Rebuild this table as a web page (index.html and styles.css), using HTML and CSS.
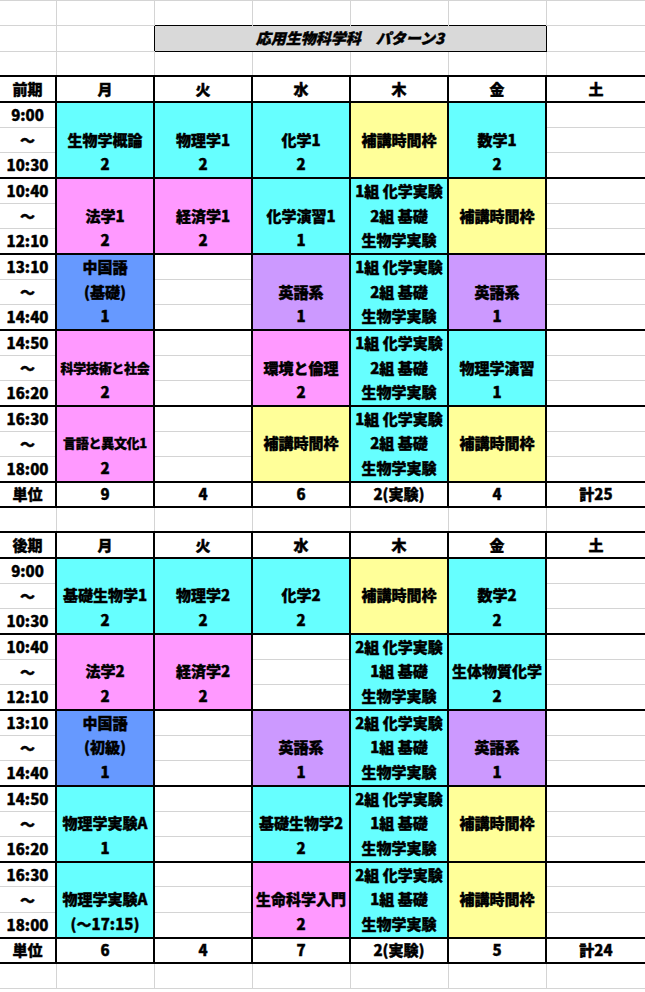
FILE: index.html
```html
<!DOCTYPE html>
<html lang="ja">
<head>
  <meta charset="UTF-8">
  <meta name="viewport" content="width=device-width, initial-scale=1">
  <title>応用生物科学科 パターン3</title>
  <link rel="stylesheet" href="styles.css">
</head>
<body>
  <table class="sheet">
    <colgroup>
      <col class="c-time">
      <col class="c-day"><col class="c-day"><col class="c-day"><col class="c-day"><col class="c-day">
      <col class="c-sat">
    </colgroup>

    <tr class="gl"><td></td><td></td><td class="nb"></td><td class="nb"></td><td class="nb"></td><td class="nb"></td><td></td></tr>
    <tr class="gl"><td></td><td class="nr"></td><td colspan="4" class="title">応用生物科学科　パターン3</td><td></td></tr>
    <tr class="gl"><td></td><td></td><td class="nt"></td><td class="nt"></td><td class="nt"></td><td class="nt"></td><td></td></tr>

    <!-- 前期 -->
    <tr class="hd"><td>前期</td><td>月</td><td>火</td><td>水</td><td>木</td><td>金</td><td>土</td></tr>

    <tr class="pa">
      <td>9:00</td>
      <td rowspan="3" class="blk cyan"><div class="ln"><span></span><span>生物学概論</span><span>2</span></div></td>
      <td rowspan="3" class="blk cyan"><div class="ln"><span></span><span>物理学1</span><span>2</span></div></td>
      <td rowspan="3" class="blk cyan"><div class="ln"><span></span><span>化学1</span><span>2</span></div></td>
      <td rowspan="3" class="blk yellow"><div class="ln"><span></span><span>補講時間枠</span><span></span></div></td>
      <td rowspan="3" class="blk cyan"><div class="ln"><span></span><span>数学1</span><span>2</span></div></td>
      <td></td>
    </tr>
    <tr class="pb"><td>～</td><td></td></tr>
    <tr class="pc"><td>10:30</td><td></td></tr>

    <tr class="pa">
      <td>10:40</td>
      <td rowspan="3" class="blk pink"><div class="ln"><span></span><span>法学1</span><span>2</span></div></td>
      <td rowspan="3" class="blk pink"><div class="ln"><span></span><span>経済学1</span><span>2</span></div></td>
      <td rowspan="3" class="blk cyan"><div class="ln"><span></span><span>化学演習1</span><span>1</span></div></td>
      <td rowspan="3" class="blk cyan"><div class="ln"><span>1組 化学実験</span><span>2組 基礎</span><span>生物学実験</span></div></td>
      <td rowspan="3" class="blk yellow"><div class="ln"><span></span><span>補講時間枠</span><span></span></div></td>
      <td></td>
    </tr>
    <tr class="pb"><td>～</td><td></td></tr>
    <tr class="pc"><td>12:10</td><td></td></tr>

    <tr class="pa">
      <td>13:10</td>
      <td rowspan="3" class="blk blue"><div class="ln"><span>中国語</span><span>(基礎)</span><span>1</span></div></td>
      <td></td>
      <td rowspan="3" class="blk purple"><div class="ln"><span></span><span>英語系</span><span>1</span></div></td>
      <td rowspan="3" class="blk cyan"><div class="ln"><span>1組 化学実験</span><span>2組 基礎</span><span>生物学実験</span></div></td>
      <td rowspan="3" class="blk purple"><div class="ln"><span></span><span>英語系</span><span>1</span></div></td>
      <td></td>
    </tr>
    <tr class="pb"><td>～</td><td></td><td></td></tr>
    <tr class="pc"><td>14:40</td><td></td><td></td></tr>

    <tr class="pa">
      <td>14:50</td>
      <td rowspan="3" class="blk pink"><div class="ln"><span></span><span class="sm">科学技術と社会</span><span>2</span></div></td>
      <td></td>
      <td rowspan="3" class="blk pink"><div class="ln"><span></span><span>環境と倫理</span><span>2</span></div></td>
      <td rowspan="3" class="blk cyan"><div class="ln"><span>1組 化学実験</span><span>2組 基礎</span><span>生物学実験</span></div></td>
      <td rowspan="3" class="blk cyan"><div class="ln"><span></span><span>物理学演習</span><span>1</span></div></td>
      <td></td>
    </tr>
    <tr class="pb"><td>～</td><td></td><td></td></tr>
    <tr class="pc"><td>16:20</td><td></td><td></td></tr>

    <tr class="pa">
      <td>16:30</td>
      <td rowspan="3" class="blk pink"><div class="ln"><span></span><span class="sm">言語と異文化1</span><span>2</span></div></td>
      <td></td>
      <td rowspan="3" class="blk yellow"><div class="ln"><span></span><span>補講時間枠</span><span></span></div></td>
      <td rowspan="3" class="blk cyan"><div class="ln"><span>1組 化学実験</span><span>2組 基礎</span><span>生物学実験</span></div></td>
      <td rowspan="3" class="blk yellow"><div class="ln"><span></span><span>補講時間枠</span><span></span></div></td>
      <td></td>
    </tr>
    <tr class="pb"><td>～</td><td></td><td></td></tr>
    <tr class="pc"><td>18:00</td><td></td><td></td></tr>

    <tr class="sum"><td>単位</td><td>9</td><td>4</td><td>6</td><td>2(実験)</td><td>4</td><td>計25</td></tr>

    <tr class="gl"><td></td><td></td><td></td><td></td><td></td><td></td><td></td></tr>

    <!-- 後期 -->
    <tr class="hd"><td>後期</td><td>月</td><td>火</td><td>水</td><td>木</td><td>金</td><td>土</td></tr>

    <tr class="pa">
      <td>9:00</td>
      <td rowspan="3" class="blk cyan"><div class="ln"><span></span><span>基礎生物学1</span><span>2</span></div></td>
      <td rowspan="3" class="blk cyan"><div class="ln"><span></span><span>物理学2</span><span>2</span></div></td>
      <td rowspan="3" class="blk cyan"><div class="ln"><span></span><span>化学2</span><span>2</span></div></td>
      <td rowspan="3" class="blk yellow"><div class="ln"><span></span><span>補講時間枠</span><span></span></div></td>
      <td rowspan="3" class="blk cyan"><div class="ln"><span></span><span>数学2</span><span>2</span></div></td>
      <td></td>
    </tr>
    <tr class="pb"><td>～</td><td></td></tr>
    <tr class="pc"><td>10:30</td><td></td></tr>

    <tr class="pa">
      <td>10:40</td>
      <td rowspan="3" class="blk pink"><div class="ln"><span></span><span>法学2</span><span>2</span></div></td>
      <td rowspan="3" class="blk pink"><div class="ln"><span></span><span>経済学2</span><span>2</span></div></td>
      <td></td>
      <td rowspan="3" class="blk cyan"><div class="ln"><span>2組 化学実験</span><span>1組 基礎</span><span>生物学実験</span></div></td>
      <td rowspan="3" class="blk cyan"><div class="ln"><span></span><span>生体物質化学</span><span>2</span></div></td>
      <td></td>
    </tr>
    <tr class="pb"><td>～</td><td></td><td></td></tr>
    <tr class="pc"><td>12:10</td><td></td><td></td></tr>

    <tr class="pa">
      <td>13:10</td>
      <td rowspan="3" class="blk blue"><div class="ln"><span>中国語</span><span>(初級)</span><span>1</span></div></td>
      <td></td>
      <td rowspan="3" class="blk purple"><div class="ln"><span></span><span>英語系</span><span>1</span></div></td>
      <td rowspan="3" class="blk cyan"><div class="ln"><span>2組 化学実験</span><span>1組 基礎</span><span>生物学実験</span></div></td>
      <td rowspan="3" class="blk purple"><div class="ln"><span></span><span>英語系</span><span>1</span></div></td>
      <td></td>
    </tr>
    <tr class="pb"><td>～</td><td></td><td></td></tr>
    <tr class="pc"><td>14:40</td><td></td><td></td></tr>

    <tr class="pa">
      <td>14:50</td>
      <td rowspan="3" class="blk cyan"><div class="ln"><span></span><span>物理学実験A</span><span>1</span></div></td>
      <td></td>
      <td rowspan="3" class="blk cyan"><div class="ln"><span></span><span>基礎生物学2</span><span>2</span></div></td>
      <td rowspan="3" class="blk cyan"><div class="ln"><span>2組 化学実験</span><span>1組 基礎</span><span>生物学実験</span></div></td>
      <td rowspan="3" class="blk yellow"><div class="ln"><span></span><span>補講時間枠</span><span></span></div></td>
      <td></td>
    </tr>
    <tr class="pb"><td>～</td><td></td><td></td></tr>
    <tr class="pc"><td>16:20</td><td></td><td></td></tr>

    <tr class="pa">
      <td>16:30</td>
      <td rowspan="3" class="blk cyan"><div class="ln"><span></span><span>物理学実験A</span><span>(～17:15)</span></div></td>
      <td></td>
      <td rowspan="3" class="blk pink"><div class="ln"><span></span><span>生命科学入門</span><span>2</span></div></td>
      <td rowspan="3" class="blk cyan"><div class="ln"><span>2組 化学実験</span><span>1組 基礎</span><span>生物学実験</span></div></td>
      <td rowspan="3" class="blk yellow"><div class="ln"><span></span><span>補講時間枠</span><span></span></div></td>
      <td></td>
    </tr>
    <tr class="pb"><td>～</td><td></td><td></td></tr>
    <tr class="pc"><td>18:00</td><td></td><td></td></tr>

    <tr class="sum"><td>単位</td><td>6</td><td>4</td><td>7</td><td>2(実験)</td><td>5</td><td>計24</td></tr>

    <tr class="gl"><td></td><td></td><td></td><td></td><td></td><td></td><td></td></tr>
  </table>
</body>
</html>
```

FILE: styles.css
```css
body {
  margin: 0;
  padding: 0;
  background: #fff;
  overflow: hidden;
  font-family: "Noto Sans CJK JP", "Noto Sans", sans-serif;
  color: #000;
}

.sheet {
  border-collapse: collapse;
  table-layout: fixed;
  width: 645px;
}

.c-time { width: 56px; }
.c-day { width: 98px; }
.c-sat { width: 99px; }

.sheet tr {
  height: 25.33px;
}

.sheet td {
  border: 1px solid #d4d4d4;
  padding: 0;
  text-align: center;
  vertical-align: middle;
  font-size: 15px;
  font-weight: 900;
  line-height: 18px;
  white-space: nowrap;
  overflow: hidden;
  -webkit-text-stroke: 0.4px #000;
}

/* title box */
.sheet td.nb { border-bottom: none; }
.sheet td.nt { border-top: none; }
.sheet td.nr { border-right: none; }

.sheet td.title {
  border: 1px solid #000;
  background: #d9d9d9;
  font-style: italic;
  font-size: 15px;
}

/* timetable lines */
.hd td, .pa td, .pb td, .pc td, .sum td {
  border-left: 2px solid #000;
  border-right: 2px solid #000;
}

.hd td, .pa td, .sum td {
  border-top: 2px solid #000;
}

.hd td, .pc td, .sum td {
  border-bottom: 2px solid #000;
}

.sheet td:first-child { border-left: none; }
.sheet td:last-child { border-right: none; }

.sheet td.blk {
  border: 2px solid #000;
}

.ln span {
  display: block;
  height: 24.5px;
  line-height: 24.5px;
}

.ln span.sm {
  font-size: 13px;
  letter-spacing: -0.3px;
}

.cyan { background: #66ffff; }
.pink { background: #ff99ff; }
.yellow { background: #ffff99; }
.blue { background: #6699ff; }
.purple { background: #cc99ff; }
```
